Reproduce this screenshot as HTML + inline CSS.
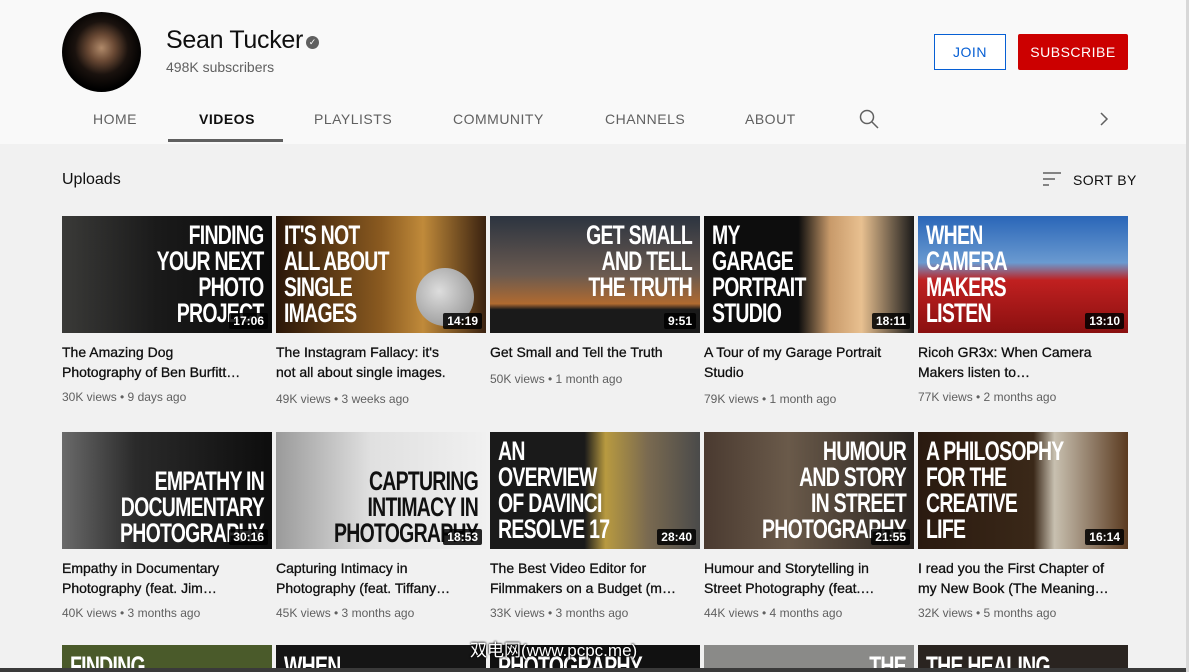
<!DOCTYPE html>
<html style="width:1189px;height:672px;overflow:hidden"><head><meta charset="utf-8"><style>
*{margin:0;padding:0;box-sizing:border-box}
body{width:1189px;height:672px;overflow:hidden;background:#f1f1f1;font-family:"Liberation Sans",sans-serif;position:relative}
.hdr{position:absolute;left:0;top:0;width:1189px;height:144px;background:#f9f9f9}
.av{position:absolute;left:62px;top:12px;width:79px;height:80px;border-radius:50%;background:radial-gradient(circle at 50% 45%,#b08a6a 0,#6b4a35 22%,#1a120e 45%,#000 70%)}
.name{position:absolute;left:166px;top:26px;font-size:25px;color:#0f0f0f;letter-spacing:-.3px}
.chk{position:absolute;left:306px;top:36px;width:13px;height:13px;border-radius:50%;background:#606060;color:#fff;font-size:9px;line-height:13px;text-align:center}
.subs{position:absolute;left:166px;top:59px;font-size:14px;color:#606060}
.join{position:absolute;left:934px;top:34px;width:72px;height:36px;border:1px solid #065fd4;color:#065fd4;font-size:14px;text-align:center;line-height:34px;letter-spacing:.5px;background:#fff}
.sub{position:absolute;left:1018px;top:34px;width:110px;height:36px;background:#cc0000;color:#fff;font-size:14px;text-align:center;line-height:36px;letter-spacing:.5px;border-radius:2px}
.tab{position:absolute;top:111px;font-size:14px;color:#606060;letter-spacing:.5px}
.uline{position:absolute;left:168px;top:139px;width:115px;height:3px;background:#606060}
.upl{position:absolute;left:62px;top:171px;font-size:16px;color:#0f0f0f}
.sort{position:absolute;left:1073px;top:172px;font-size:14px;color:#0f0f0f;letter-spacing:.4px}
.th{position:absolute;width:210px;height:117px;overflow:hidden}
.th .t{position:absolute;right:8px;top:6px;color:#fff;font-weight:bold;font-size:27px;line-height:26px;letter-spacing:-1px;text-transform:uppercase;transform:scaleX(.72);transform-origin:right top;white-space:nowrap;text-align:right}
.th .t.l{left:8px;right:auto;transform-origin:left top;text-align:left}
.dur{position:absolute;right:4px;bottom:4px;background:rgba(0,0,0,.85);color:#fff;font-size:12px;font-weight:bold;padding:1px 4px;border-radius:2px}
.ti{position:absolute;width:205px;font-size:14px;line-height:20px;color:#0f0f0f;-webkit-text-stroke:.3px #0f0f0f}
.me{position:absolute;font-size:12px;color:#606060}
.wm{position:absolute;left:470px;top:636px;font-size:17px;color:#fff;text-shadow:0 0 2px #000,0 0 2px #000;font-family:"Liberation Sans","Noto Sans CJK SC",sans-serif}
</style></head><body>
<div class="hdr"></div>
<div class="av"></div>
<div class="name">Sean Tucker</div><div class="chk">✓</div>
<div class="subs">498K subscribers</div>
<div class="join">JOIN</div><div class="sub">SUBSCRIBE</div>
<div class="tab" style="left:93px">HOME</div>
<div class="tab" style="left:199px;color:#0f0f0f;font-weight:bold">VIDEOS</div>
<div class="tab" style="left:314px">PLAYLISTS</div>
<div class="tab" style="left:453px">COMMUNITY</div>
<div class="tab" style="left:605px">CHANNELS</div>
<div class="tab" style="left:745px">ABOUT</div>
<svg style="position:absolute;left:859px;top:109px" width="20" height="20" viewBox="0 0 20 20"><circle cx="8" cy="8" r="6.5" fill="none" stroke="#606060" stroke-width="1.5"/><path d="M13 13l6 6" stroke="#606060" stroke-width="1.5"/></svg>
<svg style="position:absolute;left:1098px;top:112px" width="12" height="14" viewBox="0 0 12 14"><path d="M3 1l6 6-6 6" fill="none" stroke="#606060" stroke-width="1.5"/></svg>
<div class="uline"></div>
<div class="upl">Uploads</div>
<svg style="position:absolute;left:1043px;top:171px" width="18" height="16" viewBox="0 0 18 16"><path d="M0 2h18M0 8h12M0 14h6" stroke="#606060" stroke-width="1.5"/></svg>
<div class="sort">SORT BY</div>

<div class="th" style="left:62px;top:216px;background:linear-gradient(90deg,#3a3a38,#1a1a1a 45%,#0b0b0b)"><div class="t">Finding<br>your next<br>photo<br>project</div><div class="dur">17:06</div></div>
<div class="th" style="left:276px;top:216px;background:linear-gradient(90deg,#2a1608,#8a5a20 50%,#c08a3a 70%,#3a2210)"><div class="t l">It's not<br>all about<br>single<br>images</div><div style="position:absolute;left:140px;top:52px;width:58px;height:58px;border-radius:50%;background:radial-gradient(circle at 40% 40%,#ddd,#888)"></div><div class="dur">14:19</div></div>
<div class="th" style="left:490px;top:216px;background:linear-gradient(180deg,#2c3440,#6a5a50 50%,#b06a30 75%,#1a1a1a 80%)"><div class="t">Get small<br>and tell<br>the truth</div><div class="dur">9:51</div></div>
<div class="th" style="left:704px;top:216px;background:linear-gradient(90deg,#0d0d0d 45%,#c89a6a 60%,#e8c090 75%,#1a1a1a)"><div class="t l">My<br>garage<br>portrait<br>studio</div><div class="dur">18:11</div></div>
<div class="th" style="left:918px;top:216px;background:linear-gradient(180deg,#2a66b8,#6a9ad0 40%,#c02020 55%,#8a1010)"><div class="t l">When<br>camera<br>makers<br>listen</div><div class="dur">13:10</div></div>

<div class="ti" style="left:62px;top:342px">The Amazing Dog<br>Photography of Ben Burfitt…</div><div class="me" style="left:62px;top:390px">30K views • 9 days ago</div>
<div class="ti" style="left:276px;top:342px">The Instagram Fallacy: it's<br>not all about single images.</div><div class="me" style="left:276px;top:392px">49K views • 3 weeks ago</div>
<div class="ti" style="left:490px;top:342px">Get Small and Tell the Truth</div><div class="me" style="left:490px;top:372px">50K views • 1 month ago</div>
<div class="ti" style="left:704px;top:342px">A Tour of my Garage Portrait<br>Studio</div><div class="me" style="left:704px;top:392px">79K views • 1 month ago</div>
<div class="ti" style="left:918px;top:342px">Ricoh GR3x: When Camera<br>Makers listen to…</div><div class="me" style="left:918px;top:390px">77K views • 2 months ago</div>

<div class="th" style="left:62px;top:432px;background:linear-gradient(90deg,#6a6a6a,#2a2a2a 35%,#0d0d0d)"><div class="t" style="top:36px">Empathy in<br>documentary<br>photography</div><div class="dur">30:16</div></div>
<div class="th" style="left:276px;top:432px;background:linear-gradient(90deg,#9a9a9a,#e0e0e0 45%,#f0f0f0)"><div class="t" style="top:36px;color:#111">Capturing<br>intimacy in<br>photography</div><div class="dur">18:53</div></div>
<div class="th" style="left:490px;top:432px;background:linear-gradient(90deg,#1a1a1a 45%,#b89a40 55%,#7a6a50 75%,#4a4a4a)"><div class="t l">An<br>overview<br>of DaVinci<br>Resolve 17</div><div class="dur">28:40</div></div>
<div class="th" style="left:704px;top:432px;background:linear-gradient(90deg,#4a3a30,#6a5a4a 40%,#2a2420)"><div class="t">Humour<br>and story<br>in street<br>photography</div><div class="dur">21:55</div></div>
<div class="th" style="left:918px;top:432px;background:linear-gradient(90deg,#2a1a10,#3a2818 55%,#c8c0b0 65%,#5a3a20)"><div class="t l">A philosophy<br>for the<br>creative<br>life</div><div class="dur">16:14</div></div>

<div class="ti" style="left:62px;top:558px">Empathy in Documentary<br>Photography (feat. Jim…</div><div class="me" style="left:62px;top:606px">40K views • 3 months ago</div>
<div class="ti" style="left:276px;top:558px">Capturing Intimacy in<br>Photography (feat. Tiffany…</div><div class="me" style="left:276px;top:606px">45K views • 3 months ago</div>
<div class="ti" style="left:490px;top:558px">The Best Video Editor for<br>Filmmakers on a Budget (m…</div><div class="me" style="left:490px;top:606px">33K views • 3 months ago</div>
<div class="ti" style="left:704px;top:558px">Humour and Storytelling in<br>Street Photography (feat.…</div><div class="me" style="left:704px;top:606px">44K views • 4 months ago</div>
<div class="ti" style="left:918px;top:558px">I read you the First Chapter of<br>my New Book (The Meaning…</div><div class="me" style="left:918px;top:606px">32K views • 5 months ago</div>

<div class="th" style="left:62px;top:645px;height:23px;background:#4a5a2a"><div class="t l" style="top:8px">Finding</div></div>
<div class="th" style="left:276px;top:645px;height:23px;background:#151515"><div class="t l" style="top:8px">When</div></div>
<div class="th" style="left:490px;top:645px;height:23px;background:#111"><div class="t l" style="top:8px">Photography</div></div>
<div class="th" style="left:704px;top:645px;height:23px;background:#8a8a88"><div class="t" style="top:8px">The</div></div>
<div class="th" style="left:918px;top:645px;height:23px;background:#2a2420"><div class="t l" style="top:8px">The healing</div></div>
<div class="wm">双电网(www.pcpc.me)</div>
<div style="position:absolute;left:0;top:668px;width:1189px;height:4px;background:#3a3a3a"></div>
<div style="position:absolute;left:1186px;top:0;width:3px;height:672px;background:#d8d8d8"></div>
</body></html>
